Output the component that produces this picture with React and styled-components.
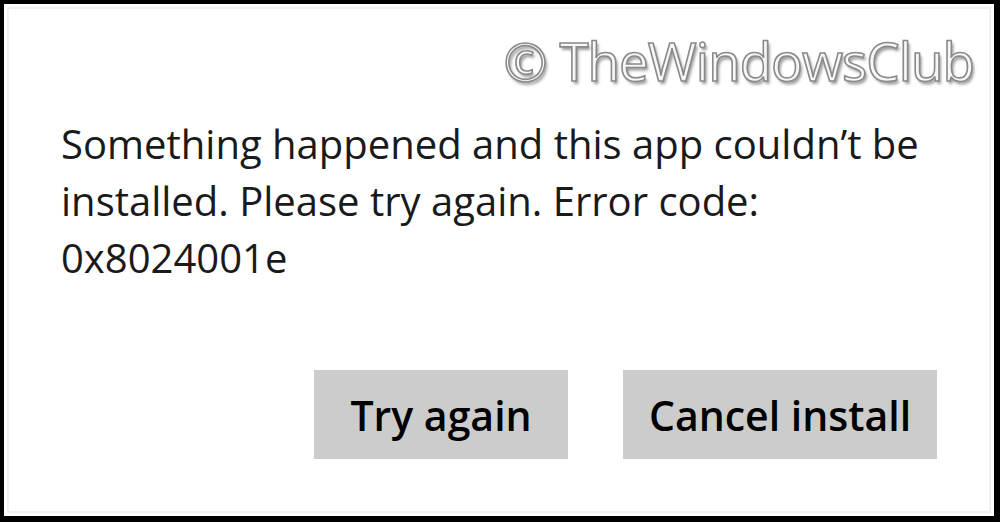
import React from "react";
import styled, { createGlobalStyle } from "styled-components";

const Global = createGlobalStyle`
  html, body { margin: 0; padding: 0; background: #fff; }
  body { font-family: "Open Sans", "Noto Sans", sans-serif; }
`;

const Frame = styled.div`
  box-sizing: border-box;
  width: 1000px;
  height: 522px;
  border-style: solid;
  border-color: #000;
  border-width: 4px 6px 6px 4px;
  background: #fff;
  padding: 3px;
`;

const Inner = styled.div`
  box-sizing: border-box;
  height: 100%;
  border: 2px solid #f1f1f1;
  display: flex;
  flex-direction: column;
  padding: 0 52px 0 52px;
`;

const Watermark = styled.div`
  align-self: flex-end;
  margin-top: 22px;
  margin-right: -37px;
  font-family: "Open Sans", sans-serif;
  font-size: 53px;
  line-height: 60px;
  letter-spacing: -1px;
  color: #f7f7f7;
  -webkit-text-stroke: 1.6px #8a8a8a;
  text-shadow: 2px 3px 3px rgba(0, 0, 0, 0.4);
  white-space: nowrap;
`;

const Message = styled.p`
  margin: 24px 0 0;
  font-family: "Open Sans", sans-serif;
  font-size: 40px;
  line-height: 57px;
  color: #1a1a1a;
  max-width: 880px;
`;

const Actions = styled.div`
  margin-top: auto;
  margin-bottom: 52px;
  display: flex;
  justify-content: flex-end;
  gap: 55px;
`;

const Button = styled.button`
  box-sizing: border-box;
  width: ${(p) => p.$w}px;
  height: 89px;
  border: none;
  background: #cccccc;
  font-family: "Open Sans", sans-serif;
  font-weight: 600;
  font-size: 41px;
  color: #000;
  padding: 0;
`;

export default function App() {
  return (
    <>
      <Global />
      <Frame>
        <Inner>
          <Watermark>© TheWindowsClub</Watermark>
          <Message>
            Something happened and this app couldn’t be installed. Please try again. Error code: 0x8024001e
          </Message>
          <Actions>
            <Button $w={254}>Try again</Button>
            <Button $w={314}>Cancel install</Button>
          </Actions>
        </Inner>
      </Frame>
    </>
  );
}
